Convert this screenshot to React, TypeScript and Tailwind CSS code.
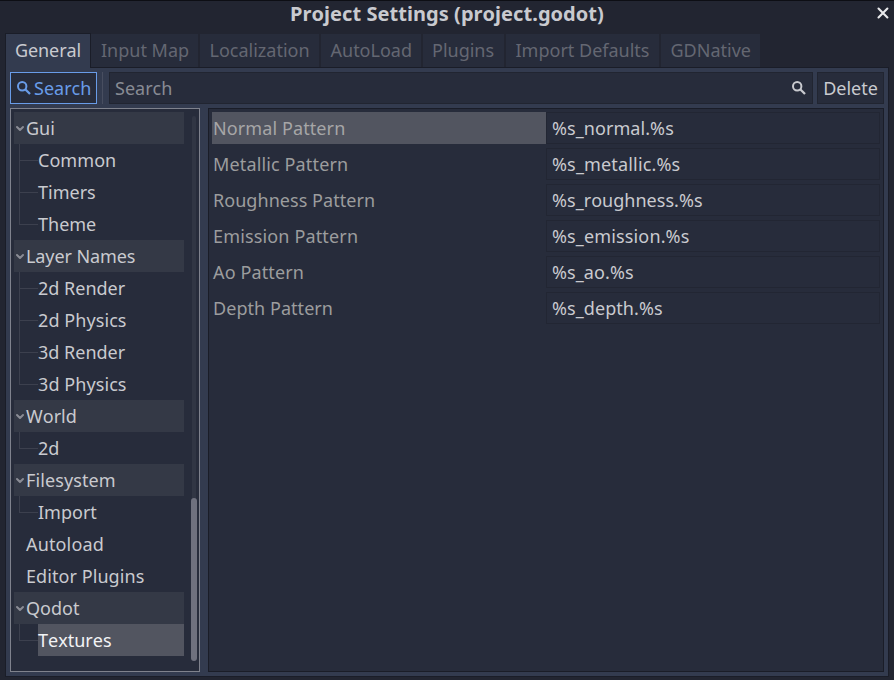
import React from "react";

type TreeRow = {
  label: string;
  kind: "group" | "child" | "leaf";
  last?: boolean;
  selected?: boolean;
  tracking?: string;
};

const tree: TreeRow[] = [
  { label: "Gui", kind: "group" },
  { label: "Common", kind: "child", tracking: "tracking-[0.05px]" },
  { label: "Timers", kind: "child" },
  { label: "Theme", kind: "child", last: true },
  { label: "Layer Names", kind: "group", tracking: "tracking-[-0.1px]" },
  { label: "2d Render", kind: "child" },
  { label: "2d Physics", kind: "child", tracking: "tracking-[0.08px]" },
  { label: "3d Render", kind: "child" },
  { label: "3d Physics", kind: "child", last: true, tracking: "tracking-[0.08px]" },
  { label: "World", kind: "group" },
  { label: "2d", kind: "child", last: true },
  { label: "Filesystem", kind: "group", tracking: "tracking-[0.1px]" },
  { label: "Import", kind: "child", last: true },
  { label: "Autoload", kind: "leaf", tracking: "tracking-[0.15px]" },
  { label: "Editor Plugins", kind: "leaf", tracking: "tracking-[0.07px]" },
  { label: "Qodot", kind: "group" },
  { label: "Textures", kind: "child", last: true, selected: true },
];

const tabs = [
  { label: "Input Map", width: "w-[107px]", pad: "pl-[10px]" },
  { label: "Localization", width: "w-[119px]", pad: "pl-[9.5px]" },
  { label: "AutoLoad", width: "w-[100px]", pad: "pl-[9.5px]" },
  { label: "Plugins", width: "w-[81px]", pad: "pl-[9px]" },
  { label: "Import Defaults", width: "w-[153px]", pad: "pl-[9.5px]" },
  { label: "GDNative", width: "w-[99px]", pad: "pl-[9.5px]" },
];

const properties = [
  { name: "Normal Pattern", value: "%s_normal.%s", nameTracking: "tracking-[0.1px]", valueTracking: "tracking-[0.07px]", selected: true },
  { name: "Metallic Pattern", value: "%s_metallic.%s", nameTracking: "tracking-[0.14px]", valueTracking: "tracking-[0.16px]" },
  { name: "Roughness Pattern", value: "%s_roughness.%s", nameTracking: "tracking-[0.05px]", valueTracking: "tracking-[0.03px]" },
  { name: "Emission Pattern", value: "%s_emission.%s", nameTracking: "tracking-[0.15px]", valueTracking: "tracking-[0.14px]" },
  { name: "Ao Pattern", value: "%s_ao.%s", nameTracking: "tracking-[0.13px]", valueTracking: "tracking-[0.09px]" },
  { name: "Depth Pattern", value: "%s_depth.%s", nameTracking: "tracking-[0.05px]", valueTracking: "tracking-[0.07px]" },
];

function SearchIcon({ className }: { className: string }) {
  return (
    <svg viewBox="0 0 16 16" className={`h-4 w-4 shrink-0 ${className}`} fill="none" stroke="currentColor" strokeWidth="2">
      <circle cx="6.2" cy="6.2" r="4.2" />
      <path d="M9.2 9.2 14 14" strokeWidth="2.3" />
    </svg>
  );
}

function Arrow() {
  return (
    <svg viewBox="0 0 12 12" className="h-3 w-3 shrink-0 text-[#8a8c95]" fill="none" stroke="currentColor" strokeWidth="2" strokeLinecap="round" strokeLinejoin="round">
      <path d="M3 5 6 8 9 5" />
    </svg>
  );
}

function TreeItem({ row }: { row: TreeRow }) {
  const tracking = row.tracking ?? "";
  if (row.kind === "group") {
    return (
      <div className={`flex h-8 items-center bg-[#343946] ${tracking}`}>
        <Arrow />
        <span>{row.label}</span>
      </div>
    );
  }
  if (row.kind === "leaf") {
    return <div className={`flex h-8 items-center pl-3 ${tracking}`}>{row.label}</div>;
  }
  return (
    <div className="flex h-8">
      <div className="w-[5px] shrink-0" />
      <div className="w-[19px] shrink-0">
        <div className="h-[17px] border-b border-l border-[#3c404e]" />
        {!row.last && <div className="h-[15px] border-l border-[#3c404e]" />}
      </div>
      <div className={`flex flex-1 items-center ${tracking} ${row.selected ? "bg-[#525560] text-[#f2f3f5]" : ""}`}>{row.label}</div>
    </div>
  );
}

export default function App() {
  return (
    <div className="flex h-[680px] w-[894px] flex-col overflow-hidden whitespace-nowrap border-t border-[#0d0e14] bg-[#222531] font-['Noto_Sans',sans-serif] text-[18px] leading-8 text-[#c9cacf] [font-kerning:none]">
      <header className="flex h-8 items-start">
        <div className="w-[870px] pl-6 text-center text-[20px] font-bold leading-[25px] tracking-[0.05px]">Project Settings (project.godot)</div>
        <svg viewBox="0 0 16 16" className="mt-1 ml-[5px] h-4 w-4 text-[#e9eaec]" fill="none" stroke="currentColor" strokeWidth="2.1" strokeLinecap="round">
          <path d="M3.5 3.5 12.4 12.4M12.4 3.5 3.5 12.4" />
        </svg>
      </header>
      <nav className="flex h-[35px] shrink-0 pl-[5px]">
        <div className="z-10 h-[35px] w-[86px] border-x border-t border-[#1a1d28] bg-[#333b4f] pl-[9px] leading-[33px] tracking-[-0.1px]">General</div>
        <div className="flex h-[34px] gap-[2px] pt-px text-[#646772]">
          {tabs.map((tab) => (
            <div key={tab.label} className={`h-[33px] bg-[#272c3b] leading-[33px] ${tab.width} ${tab.pad}`}>
              {tab.label}
            </div>
          ))}
        </div>
      </nav>
      <main className="-mt-px ml-[5px] flex h-[610px] w-[884px] flex-col gap-1 border border-[#1a1d28] bg-[#333b4f] p-1">
        <div className="flex h-8 shrink-0">
          <button className="flex w-[87px] items-center border border-[#699ce8] bg-[#272c3b] pl-[5px] text-[#699ce8]">
            <SearchIcon className="-mt-px" />
            <span className="ml-[2px]">Search</span>
          </button>
          <div className="ml-[5px] w-px bg-[#484e60]" />
          <div className="ml-[6px] flex w-[704px] items-center justify-between border border-[#212531] bg-[#272c3b] pr-[5px] pl-[5px] text-[#888b94]">
            <span>Search</span>
            <SearchIcon className="-mt-px text-[#c9cacf]" />
          </div>
          <button className="ml-1 w-[67px] border border-[#212531] bg-[#272c3b] leading-[30px]">Delete</button>
        </div>
        <div className="flex h-[564px] shrink-0 gap-2">
          <aside className="flex w-[190px] border border-[#7f828d] bg-[#272c3b] py-[3px] pl-[3px]">
            <div className="w-[170px]">
              {tree.map((row) => (
                <TreeItem key={row.label} row={row} />
              ))}
            </div>
            <div className="mt-1 ml-[7px] flex h-[545px] w-1.5 justify-center rounded-full">
              <div className="flex w-1 flex-col items-center rounded-full bg-[#313644]">
                <div className="mt-[382px] h-[163px] w-1.5 shrink-0 rounded-full bg-[#6f717e]" />
              </div>
            </div>
          </aside>
          <section className="flex w-[676px] flex-col gap-1 border border-[#1a1d28] bg-[#272c3b] p-[3px]">
            {properties.map((property) => (
              <div key={property.name} className="flex h-8">
                <div className={`w-[334px] pl-px ${property.nameTracking} ${property.selected ? "bg-[#525560] text-[#a6a6a7]" : "text-[#9c9d9e]"}`}>{property.name}</div>
                <div className={`w-[334px] border border-[#222633] pl-[5px] leading-[30px] ${property.valueTracking}`}>{property.value}</div>
              </div>
            ))}
          </section>
        </div>
      </main>
    </div>
  );
}
